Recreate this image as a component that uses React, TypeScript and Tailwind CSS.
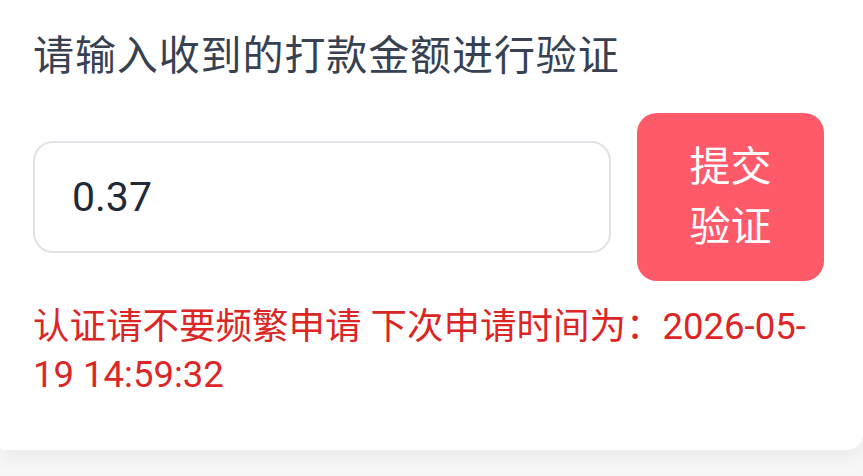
import React, { useState } from "react";

const FONT = "font-['Roboto','Noto_Sans_CJK_SC',sans-serif]";

export default function App() {
  const [amount, setAmount] = useState("0.37");

  return (
    <div className={`min-h-screen bg-[#f7f7f7] ${FONT}`}>
      <div className="rounded-br-[16px] rounded-bl-[4px] bg-white pl-[33px] pr-[39px] pt-[25px] pb-[51px] shadow-[0_6px_20px_rgba(0,0,0,0.06)]">
        <h2 className="text-[41px] leading-[62px] font-normal tracking-[0.9px] text-[#374151]">
          请输入收到的打款金额进行验证
        </h2>

        <div className="mt-[26px] flex items-center gap-[26px]">
          <input
            type="text"
            value={amount}
            onChange={(event) => setAmount(event.target.value)}
            className="h-[112px] min-w-0 flex-1 rounded-[20px] border-2 border-[#dfe2e7] bg-white px-[37px] text-[41px] text-[#1f2937] outline-none"
          />
          <button
            type="button"
            className="flex h-[168px] w-[187px] shrink-0 flex-col items-center justify-center rounded-[20px] bg-[#ff5a69] text-[41px] leading-[60px] text-white"
          >
            <span>提交</span>
            <span>验证</span>
          </button>
        </div>

        <p className="mt-[22px] text-[36.5px] leading-[48px] text-[#dc2626]">
          认证请不要频繁申请 下次申请时间为：2026-05-19 14:59:32
        </p>
      </div>
    </div>
  );
}
